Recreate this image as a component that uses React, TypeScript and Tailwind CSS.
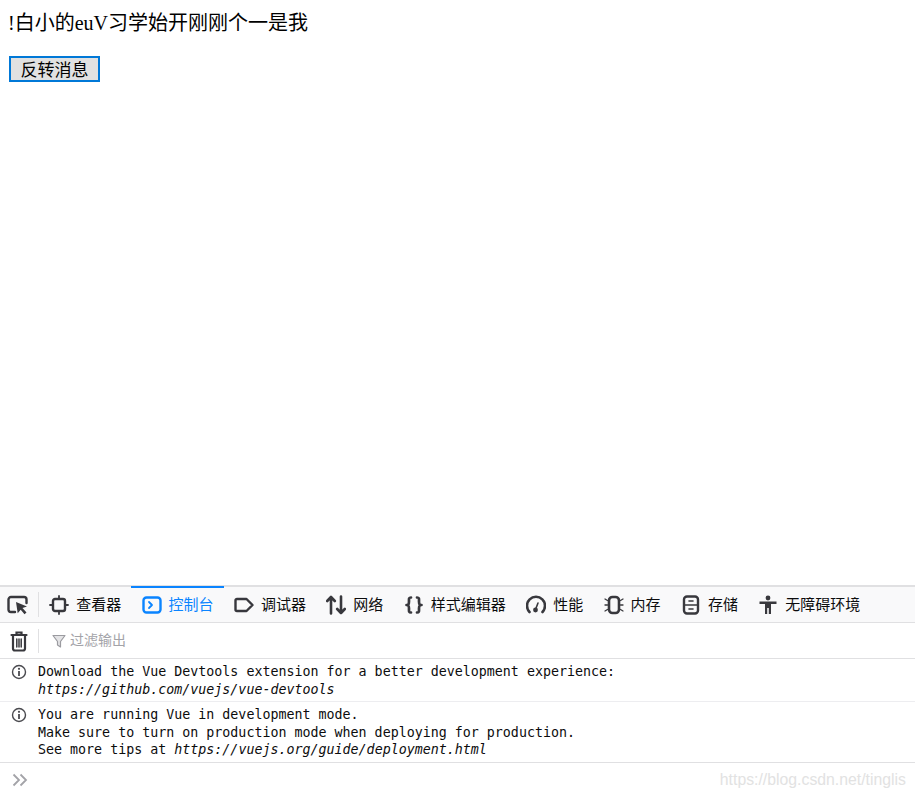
import React from "react";

const cjk = "font-['Liberation_Sans','Noto_Sans_CJK_SC',sans-serif]";
const mono = "font-['DejaVu_Sans_Mono','Liberation_Mono',monospace]";

const tabs = [
  { label: "查看器", icon: "inspector" },
  { label: "控制台", icon: "console", active: true },
  { label: "调试器", icon: "debugger" },
  { label: "网络", icon: "network" },
  { label: "样式编辑器", icon: "style" },
  { label: "性能", icon: "perf" },
  { label: "内存", icon: "memory" },
  { label: "存储", icon: "storage" },
  { label: "无障碍环境", icon: "a11y" },
];

function TabIcon({ name }: { name: string }) {
  const common = { fill: "none", stroke: "currentColor", strokeWidth: 2.4, strokeLinecap: "round" as const, strokeLinejoin: "round" as const };
  return (
    <svg width="20" height="20" viewBox="0 0 20 20" className="shrink-0" {...common}>
      {name === "inspector" && (
        <>
          <rect x="4" y="4" width="12" height="12" rx="2" />
          <path d="M10 1v3M10 16v3M1 10h3M16 10h3" strokeWidth="1.800" />
        </>
      )}
      {name === "console" && (
        <>
          <rect x="1.500" y="2.500" width="17" height="15" rx="3" />
          <path d="M7 7l3 3-3 3" strokeWidth="1.800" />
        </>
      )}
      {name === "debugger" && <path d="M1.500 5.500A1.500 1.500 0 0 1 3 4H12.500L18.500 10l-6 6H3a1.500 1.500 0 0 1-1.500-1.500z" />}
      {name === "network" && <path d="M5 18.500V2M1.200 6L5 2l3.800 4M15 1.500V18M11.200 14l3.800 4 3.800-4" strokeWidth="2.600" />}
      {name === "style" && <path d="M7 2.500C4.500 2.500 5 4 5 6.500 5 9 4.500 10 2.500 10 4.500 10 5 11 5 13.500 5 16 4.500 17.500 7 17.500M13 2.500C15.500 2.500 15 4 15 6.500 15 9 15.500 10 17.500 10 15.500 10 15 11 15 13.500 15 16 15.500 17.500 13 17.500" strokeWidth="2.700" />}
      {name === "perf" && (
        <>
          <path d="M3.500 17A9 9 0 1 1 16.500 17" strokeWidth="2.600" />
          <path d="M9.500 14.500L12 8" strokeWidth="1.600" />
          <circle cx="9.500" cy="15" r="2.400" fill="currentColor" stroke="none" />
        </>
      )}
      {name === "memory" && (
        <>
          <rect x="5" y="2" width="10" height="16" rx="3.500" strokeWidth="2.600" />
          <path d="M1 4l2.500 1.500M1 10h2.500M1 16l2.500-1.500M19 4l-2.500 1.500M19 10h-2.500M19 16l-2.500-1.500" strokeWidth="1.300" />
        </>
      )}
      {name === "storage" && (
        <>
          <rect x="3" y="1.500" width="14" height="17" rx="3" />
          <path d="M8 6h4M3 10h14M8 14h4" strokeWidth="1.600" />
        </>
      )}
      {name === "a11y" && (
        <>
          <circle cx="10" cy="3" r="2.400" fill="currentColor" stroke="none" />
          <path d="M1.500 6.500h17v2.400h-5.500V19h-2.200v-6H9.200v6H7V8.900H1.500z" fill="currentColor" stroke="none" />
        </>
      )}
    </svg>
  );
}

function InfoIcon() {
  return (
    <svg width="16" height="16" viewBox="0 0 16 16" className="shrink-0 text-[#4a4a4f]">
      <circle cx="8" cy="8" r="6.500" fill="none" stroke="currentColor" strokeWidth="1.400" />
      <rect x="7.100" y="7" width="1.800" height="5" fill="currentColor" />
      <circle cx="8" cy="4.800" r="1.100" fill="currentColor" />
    </svg>
  );
}

function Message({ lines, className }: { lines: React.ReactNode[]; className: string }) {
  return (
    <div className={`flex shrink-0 gap-[11px] border-b pl-[11px] pt-[4px] ${className}`}>
      <div className="pt-[1px]">
        <InfoIcon />
      </div>
      <div className={`${mono} text-[13.32px] leading-[17.500px] text-[#0c0c0d]`}>
        {lines.map((line, i) => (
          <div key={i} className="h-[17.500px] whitespace-pre">
            {line}
          </div>
        ))}
      </div>
    </div>
  );
}

export default function App() {
  return (
    <div className={`flex h-[796px] w-[915px] flex-col overflow-hidden bg-white ${cjk}`}>
      <main className="flex-1 pl-2 pt-[10px] font-['Liberation_Serif','Noto_Sans_CJK_SC',serif] text-black">
        <p className="h-[27px] text-[20px] leading-[27px]">!白小的euV习学始开刚刚个一是我</p>
        <button className="ml-px mt-[19px] flex h-[26px] w-[91px] items-center justify-center border-2 border-[#0078d7] bg-[#e1e1e1] pt-[3px] font-['Liberation_Sans','Noto_Sans_CJK_SC',sans-serif] text-[17px]">
          反转消息
        </button>
      </main>

      <div className="flex h-[38px] shrink-0 items-stretch border-t-2 border-b border-t-[#e0e0e2] border-b-[#e0e0e2] bg-[#f9f9fa]">
        <div className="flex w-[39px] shrink-0 items-center pl-[7px] text-[#38383d]">
          <svg width="22" height="20" viewBox="0 0 22 20">
            <path d="M8 17H4a2.500 2.500 0 0 1-2.500-2.500v-10A2.500 2.500 0 0 1 4 2h13a2.500 2.500 0 0 1 2.500 2.500V8" fill="none" stroke="currentColor" strokeWidth="2.400" strokeLinecap="round" />
            <path d="M9 7l11 4.500-4.500 1.500 4 4.500-2 1.800-3.800-4.600-3 3.500z" fill="currentColor" />
          </svg>
        </div>
        <div className="my-[5px] -ml-px w-px bg-[#e0e0e2]" />
        <div className="flex">
          {tabs.map((tab) => (
            <div
              key={tab.label}
              className={`-mt-[1px] flex items-center gap-[7px] border-t-2 px-[10.2px] text-[15px] ${tab.active ? "border-t-[#0a84ff] text-[#0a84ff]" : "border-t-transparent text-[#0c0c0d]"}`}
            >
              <span className={tab.active ? "text-[#0a84ff]" : "text-[#38383d]"}>
                <TabIcon name={tab.icon} />
              </span>
              <span className="whitespace-nowrap">{tab.label}</span>
            </div>
          ))}
        </div>
      </div>

      <div className="flex h-[36px] shrink-0 items-center border-b border-[#e0e0e2] bg-white">
        <div className="flex w-[38px] shrink-0 justify-center text-[#38383d]">
          <svg width="18" height="22" viewBox="0 0 18 22" fill="none" stroke="currentColor" strokeWidth="2.200" strokeLinecap="round">
            <path d="M1.500 5h15M6.500 4.500V2.500h5v2" />
            <path d="M3 5.500v13a2 2 0 0 0 2 2h8a2 2 0 0 0 2-2v-13" />
            <path d="M6.800 9v8M9 9v8M11.200 9v8" strokeWidth="1.500" />
          </svg>
        </div>
        <div className="h-[24px] w-px bg-[#e0e0e2]" />
        <div className="ml-[13px] flex items-center gap-[4px] text-[14px] text-[#a3a3a8]">
          <svg width="14" height="16" viewBox="0 0 14 16" fill="none" stroke="#9b9ba0" strokeWidth="1.200" strokeLinejoin="round">
            <path d="M1 2.500h12L8.500 8.500v5.500l-3-2v-3.500z" fill="#e4e4e6" />
          </svg>
          <span>过滤输出</span>
        </div>
      </div>

      <Message
        className="h-[43px] border-[#ededf0]"
        lines={[
          "Download the Vue Devtools extension for a better development experience:",
          <em>https://github.com/vuejs/vue-devtools</em>,
        ]}
      />
      <Message
        className="h-[61px] border-[#e0e0e2]"
        lines={[
          "You are running Vue in development mode.",
          "Make sure to turn on production mode when deploying for production.",
          <>
            See more tips at <em>https://vuejs.org/guide/deployment.html</em>
          </>,
        ]}
      />

      <div className="flex h-[33px] shrink-0 items-center justify-between pl-[12px] pr-[9px]">
        <svg width="16" height="14" viewBox="0 0 16 14" fill="none" stroke="#a3a3a8" strokeWidth="1.800">
          <path d="M1.500 1.500L7 7l-5.500 5.500M8.500 1.500L14 7l-5.500 5.500" />
        </svg>
        <span className="text-[15.8px] text-[#e2e2e2]">https://blog.csdn.net/tinglis</span>
      </div>
    </div>
  );
}
